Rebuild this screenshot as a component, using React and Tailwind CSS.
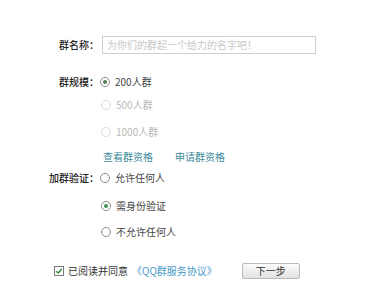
import React from 'react';

const font = { fontFamily: '"Noto Sans CJK SC", "Noto Sans", sans-serif' };

function Radio({ checked, disabled, dot = 'bg-[#3f8f4f]' }) {
  return (
    <span
      className={`flex h-[10px] w-[10px] shrink-0 items-center justify-center rounded-full border bg-white ${
        disabled ? 'border-[#d8d8d8]' : 'border-[#8a8a8a]'
      }`}
    >
      {checked && <span className={`h-[4px] w-[4px] rounded-full ${dot}`} />}
    </span>
  );
}

function Option({ label, checked, disabled, className = '' }) {
  return (
    <div className={`flex h-[16px] items-center pl-[101px] ${className}`}>
      <Radio checked={checked} disabled={disabled} />
      <span className={`ml-[5px] ${disabled ? 'text-[#b8b8b8]' : 'text-[#444]'}`}>{label}</span>
    </div>
  );
}

export default function App() {
  return (
    <div className="h-[293px] w-[366px] overflow-hidden bg-white text-[10px] leading-none text-[#333]" style={font}>
      {/* 群名称 */}
      <div className="mt-[36px] flex h-[18px] items-center">
        <span className="w-[100px] pr-[1px] text-right font-medium text-[#222]">群名称：</span>
        <div className="ml-[2px] flex h-[18px] w-[214px] items-center border border-[#cfcfcf] pl-[4px] text-[#c8c8c8]">
          为你们的群起一个给力的名字吧！
        </div>
      </div>

      {/* 群规模 */}
      <div className="mt-[20px] flex h-[16px] items-center">
        <span className="w-[100px] pr-[1px] text-right font-medium text-[#222]">群规模：</span>
        <Radio checked dot="bg-[#4f7f5a]" />
        <span className="ml-[5px] text-[#444]">200人群</span>
      </div>
      <Option label="500人群" disabled className="mt-[7px]" />
      <Option label="1000人群" disabled className="mt-[11px]" />
      <div className="mt-[9px] flex h-[16px] items-center pl-[103px] text-[#3d8a9c]">
        <span>查看群资格</span>
        <span className="ml-[22px]">申请群资格</span>
      </div>

      {/* 加群验证 */}
      <div className="mt-[5px] flex h-[16px] items-center">
        <span className="w-[100px] pr-[1px] text-right font-medium text-[#222]">加群验证：</span>
        <Radio />
        <span className="ml-[5px] text-[#444]">允许任何人</span>
      </div>
      <Option label="需身份验证" checked className="mt-[12px]" />
      <Option label="不允许任何人" className="mt-[10px]" />

      {/* 底部 */}
      <div className="mt-[23px] flex h-[16px] items-center pl-[54px]">
        <span className="flex h-[10px] w-[10px] items-center justify-center border border-[#7a7a7a] bg-white">
          <svg viewBox="0 0 10 10" className="h-[8px] w-[8px]">
            <path d="M1.5 5.2 L4 7.5 L8.5 2.5" fill="none" stroke="#2f8f3f" strokeWidth="1.8" />
          </svg>
        </span>
        <span className="ml-[4px] text-[#333]">已阅读并同意</span>
        <span className="ml-[4px] text-[#4a9ac8]">《QQ群服务协议》</span>
        <button className="ml-[25px] flex h-[16px] w-[58px] items-center justify-center rounded-[2px] border border-[#b9b9b9] bg-gradient-to-b from-[#fbfbfb] to-[#e2e2e2] text-[10px] text-[#333]">
          下一步
        </button>
      </div>
    </div>
  );
}
